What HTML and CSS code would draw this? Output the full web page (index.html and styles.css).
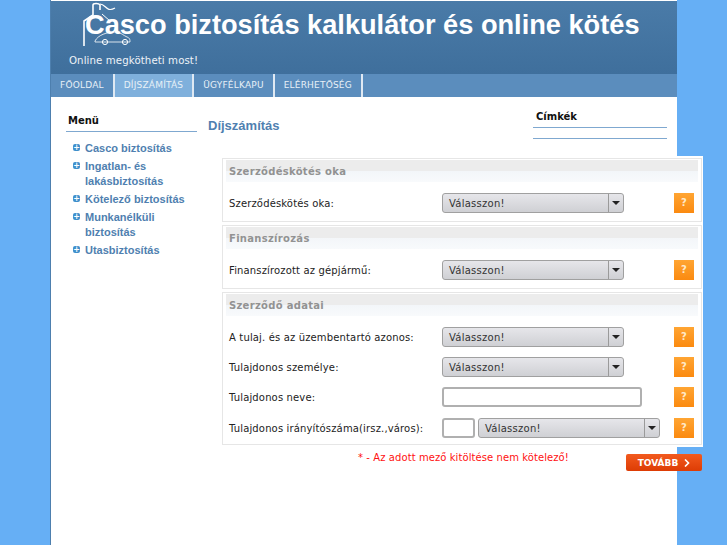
FILE: index.html
```html
<!DOCTYPE html>
<html lang="hu">
<head>
  <meta charset="UTF-8">
  <title>Casco biztosítás kalkulátor és online kötés</title>
  <link rel="stylesheet" href="styles.css">
</head>
<body>
  <div class="wrapper">
    <!-- Header -->
    <header class="header">
      <svg class="logo" width="60" height="50" viewBox="0 0 60 50" fill="none" stroke="#fff">
        <path d="M4 45V20L13 14V4C13 2 19 2 20 4V9" stroke-width="1.6"/>
        <path d="M20 3C26 3 26 12 35 7" stroke-width="1.2"/>
        <path d="M22 13L30 20" stroke-width="1"/>
        <path d="M15 40C18 34 27 31 35 31C41 31 44 35 47 36C50 37 50 39 50 41H15Z" stroke-width="1" stroke-opacity=".8"/>
        <circle cx="25" cy="41" r="2.6" stroke-width="1"/>
        <circle cx="45" cy="41" r="2.6" stroke-width="1"/>
      </svg>
      <h1 class="site-title">Casco biztosítás kalkulátor és online kötés</h1>
      <p class="site-slogan">Online megkötheti most!</p>
    </header>

    <!-- Navigation -->
    <nav class="nav">
      <a href="#">FŐOLDAL</a>
      <a href="#" class="active">DÍJSZÁMÍTÁS</a>
      <a href="#">ÜGYFÉLKAPU</a>
      <a href="#">ELÉRHETŐSÉG</a>
    </nav>

    <div class="content">
      <!-- Left menu -->
      <aside class="sidebar">
        <h3 class="side-title">Menü</h3>
        <ul class="menu">
          <li><a href="#">Casco biztosítás</a></li>
          <li><a href="#">Ingatlan- és lakásbiztosítás</a></li>
          <li><a href="#">Kötelező biztosítás</a></li>
          <li><a href="#">Munkanélküli biztosítás</a></li>
          <li><a href="#">Utasbiztosítás</a></li>
        </ul>
      </aside>

      <main class="main">
        <div class="main-top">
          <h2 class="page-title">Díjszámítás</h2>
          <div class="tags">
            <h3 class="tags-title">Címkék</h3>
            <div class="tags-line"></div>
          </div>
        </div>

        <form class="calc">
          <div class="panels">
            <section class="panel panel-one">
              <h4>Szerződéskötés oka</h4>
              <div class="row">
                <label>Szerződéskötés oka:</label>
                <div class="select"><span>Válasszon!</span><i></i></div>
                <a class="help" href="#">?</a>
              </div>
            </section>

            <section class="panel panel-one">
              <h4>Finanszírozás</h4>
              <div class="row">
                <label>Finanszírozott az gépjármű:</label>
                <div class="select"><span>Válasszon!</span><i></i></div>
                <a class="help" href="#">?</a>
              </div>
            </section>

            <section class="panel">
              <h4>Szerződő adatai</h4>
              <div class="row">
                <label>A tulaj. és az üzembentartó azonos:</label>
                <div class="select"><span>Válasszon!</span><i></i></div>
                <a class="help" href="#">?</a>
              </div>
              <div class="row">
                <label>Tulajdonos személye:</label>
                <div class="select"><span>Válasszon!</span><i></i></div>
                <a class="help" href="#">?</a>
              </div>
              <div class="row">
                <label>Tulajdonos neve:</label>
                <input class="text-input" type="text">
                <a class="help" href="#">?</a>
              </div>
              <div class="row row-zip">
                <label>Tulajdonos irányítószáma(irsz.,város):</label>
                <div class="zip-city">
                  <input class="zip-input" type="text">
                  <div class="select"><span>Válasszon!</span><i></i></div>
                </div>
                <a class="help" href="#">?</a>
              </div>
            </section>
          </div>

          <div class="form-foot">
            <p class="note">* - Az adott mező kitöltése nem kötelező!</p>
            <a class="next" href="#">TOVÁBB<svg width="6" height="8" viewBox="0 0 6 8" fill="none" stroke="#fff" stroke-width="1.6"><path d="M1 .5L4.5 4L1 7.5"/></svg></a>
          </div>
        </form>
      </main>
    </div>
  </div>
</body>
</html>
```

FILE: styles.css
```css
html, body {
  height: 100%;
}

body {
  margin: 0;
  background-color: #66aff5;
  font-family: "DejaVu Sans", sans-serif;
  font-size: 10px;
  color: #222;
  overflow: hidden;
}

.wrapper {
  box-sizing: border-box;
  width: 627px;
  height: 100%;
  margin-left: 50px;
  padding-top: 1px;
  background-color: #fff;
  border-left: 1px solid #4d7fae;
}

/* Header */
.header {
  position: relative;
  box-sizing: border-box;
  height: 73px;
  padding: 6px 0 0 34px;
  background: linear-gradient(#4a7ba8, #3f6f9c);
}

.logo {
  position: absolute;
  left: 29px;
  top: 0;
}

.site-title {
  position: relative;
  margin: 0;
  font-family: "Liberation Sans", sans-serif;
  font-size: 27.2px;
  line-height: 35px;
  font-weight: bold;
  color: #fff;
  white-space: nowrap;
}

.site-slogan {
  margin: 11px 0 0 -16px;
  font-size: 10.2px;
  line-height: 16px;
  letter-spacing: .1px;
  color: #eef3f8;
}

/* Navigation */
.nav {
  display: flex;
  height: 23px;
  background-color: #5b8dbd;
}

.nav a {
  padding: 0 9px;
  line-height: 23px;
  font-size: 9px;
  letter-spacing: .2px;
  color: #e8f0f7;
  text-decoration: none;
  border-right: 2px solid #dfe9f3;
}

.nav a.active {
  background-color: #7fb0dc;
}

/* Columns */
.content {
  display: flex;
}

.sidebar {
  width: 131px;
  margin: 16px 0 0 15px;
}

.side-title {
  margin: 0;
  padding: 0 0 3px 2px;
  font-size: 10px;
  line-height: 15px;
  color: #111;
  border-bottom: 1px solid #7fa8d0;
}

.menu {
  list-style: none;
  margin: 9px 0 0;
  padding: 0;
}

.menu li {
  position: relative;
  margin-bottom: 3px;
  padding-left: 19px;
  line-height: 15px;
}

.menu li::before {
  content: "+";
  position: absolute;
  left: 7px;
  top: 3px;
  width: 7px;
  height: 7px;
  border-radius: 2px;
  background-color: #3f8fcb;
  color: #fff;
  font-size: 8px;
  font-weight: bold;
  line-height: 7px;
  text-align: center;
}

.menu a {
  display: block;
  font-family: "Liberation Sans", sans-serif;
  font-size: 11px;
  font-weight: bold;
  color: #4f7fb0;
  text-decoration: none;
}

.main {
  width: 459px;
  margin-left: 11px;
}

.main-top {
  display: flex;
  justify-content: space-between;
  height: 59px;
}

.page-title {
  margin: 20px 0 0;
  font-family: "Liberation Sans", sans-serif;
  font-size: 13px;
  line-height: 17px;
  color: #4f7fb0;
}

.tags {
  width: 134px;
  margin-top: 12px;
}

.tags-title {
  margin: 0;
  padding: 0 0 3px 3px;
  font-size: 10px;
  line-height: 15px;
  color: #111;
  border-bottom: 1px solid #7fa8d0;
}

.tags-line {
  height: 10px;
  border-bottom: 1px solid #7fa8d0;
}

/* Calculator form */
.calc {
  width: 481px;
  margin-left: 14px;
}

.panels {
  padding: 2px 1px 2px 0;
  background-color: #fff;
}

.panel {
  box-sizing: border-box;
  margin-bottom: 3px;
  padding: 1px 3px 1px;
  background-color: #fff;
  border: 1px solid #e6e6e6;
}

.panel:last-child {
  margin-bottom: 0;
}

.panel-one {
  height: 64px;
}

.panel h4 {
  margin: 0 0 6px;
  padding-left: 3px;
  height: 22px;
  font-size: 10px;
  line-height: 23px;
  letter-spacing: .3px;
  color: #929292;
  background: linear-gradient(#ececec 0, #ececec 50%, #f3f6f9 50%, #f8fafc 100%);
}

.row {
  display: flex;
  align-items: center;
  height: 30px;
  padding-left: 3px;
}

.row-zip {
  margin-top: 1px;
}

.row label {
  width: 213px;
  letter-spacing: .15px;
  white-space: nowrap;
}

.select {
  box-sizing: border-box;
  display: flex;
  justify-content: space-between;
  width: 182px;
  height: 20px;
  background: linear-gradient(#e6e6ea, #cfd0d4);
  border: 1px solid #a0a0a0;
  border-radius: 3px;
}

.select span {
  padding-left: 6px;
  line-height: 20px;
  letter-spacing: .25px;
  color: #333;
}

.select i {
  position: relative;
  width: 14px;
  border-left: 1px solid #9a9a9a;
}

.select i::after {
  content: "";
  position: absolute;
  left: 3px;
  top: 7px;
  border: 4px solid transparent;
  border-top: 4px solid #222;
  border-bottom: 0;
}

.text-input,
.zip-input {
  box-sizing: border-box;
  height: 20px;
  padding: 0;
  background-color: #fff;
  border: 2px solid #b0b0b0;
  border-radius: 3px;
}

.text-input {
  width: 200px;
}

.zip-input {
  width: 33px;
}

.zip-city {
  display: flex;
  gap: 3px;
}

.help {
  width: 20px;
  height: 20px;
  margin-left: auto;
  margin-right: 4px;
  background: linear-gradient(#ffa533, #fb8a10);
  color: #ffe9c8;
  font-size: 10px;
  font-weight: bold;
  line-height: 20px;
  text-align: center;
  text-decoration: none;
}

.form-foot {
  position: relative;
  height: 24px;
}

.note {
  margin: 0;
  padding: 3px 0 0 136px;
  line-height: 15px;
  color: #f11;
  letter-spacing: .08px;
}

.next {
  position: absolute;
  right: 1px;
  top: 7px;
  display: flex;
  align-items: center;
  justify-content: center;
  gap: 6px;
  width: 76px;
  height: 17px;
  background: linear-gradient(#f25a1e, #dd3c05);
  border-radius: 2px;
  color: #fff;
  font-size: 9px;
  font-weight: bold;
  text-decoration: none;
}
```
